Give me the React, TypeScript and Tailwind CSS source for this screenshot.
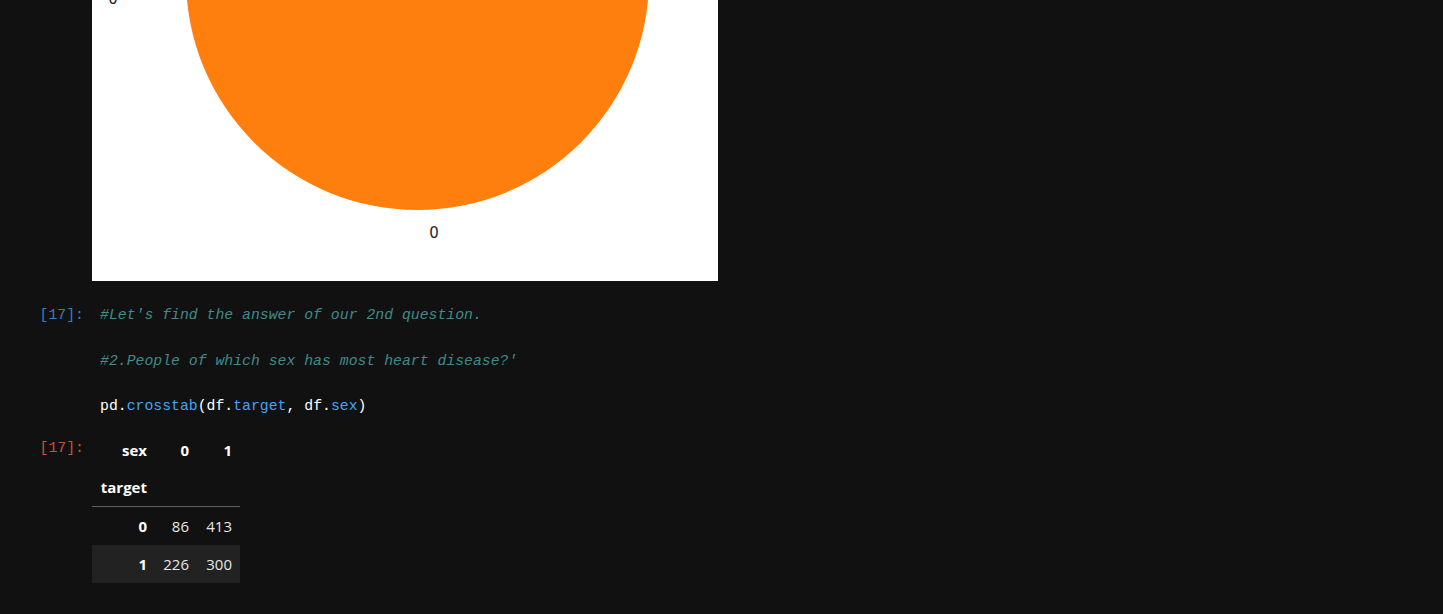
import React from 'react';

const mono = { fontFamily: '"Liberation Mono", "DejaVu Sans Mono", monospace' };

const PieOutput: React.FC = () => (
  <svg width="626" height="281" viewBox="0 0 626 281" className="block">
    <rect width="626" height="281" fill="#ffffff" />
    <circle cx="325.5" cy="-21.5" r="231.5" fill="#ff7f0e" />
    <text x="342" y="238" fontSize="15" fill="#262626" textAnchor="middle" fontFamily="DejaVu Sans, sans-serif">0</text>
    <text x="21" y="4" fontSize="15" fill="#262626" textAnchor="middle" fontFamily="DejaVu Sans, sans-serif">0</text>
  </svg>
);

const rows = [
  { idx: '0', a: '86', b: '413' },
  { idx: '1', a: '226', b: '300' },
];

export default function App() {
  return (
    <div className="min-h-screen w-full bg-[#111111] text-[#e6e6e6] overflow-hidden">
      {/* previous output: pie chart */}
      <div className="flex">
        <div className="w-[92px] shrink-0" />
        <PieOutput />
      </div>

      {/* input cell */}
      <div className="flex pt-[23px]" style={mono}>
        <div className="w-[92px] shrink-0 pr-[8px] text-right text-[14.8px] leading-[22.75px] text-[#307fc1]">[17]:</div>
        <pre className="pl-[8px] text-[14.8px] leading-[22.75px] whitespace-pre" style={mono}>
          <span className="italic text-[#408a8a]">#Let's find the answer of our 2nd question.</span>
          {'\n\n'}
          <span className="italic text-[#408a8a]">#2.People of which sex has most heart disease?'</span>
          {'\n\n'}
          <span className="text-white">pd.</span>
          <span className="text-[#42a5f5]">crosstab</span>
          <span className="text-white">(df.</span>
          <span className="text-[#42a5f5]">target</span>
          <span className="text-white">, df.</span>
          <span className="text-[#42a5f5]">sex</span>
          <span className="text-white">)</span>
        </pre>
      </div>

      {/* output cell */}
      <div className="flex pt-[13px]">
        <div className="w-[92px] shrink-0 pr-[8px] pt-[6px] text-right text-[14.8px] leading-[22.75px] text-[#c9552f]" style={mono}>[17]:</div>
        <div className="text-[15px]" style={{ fontFamily: '"Open Sans", "Noto Sans", sans-serif' }}>
          <div className="flex h-[38px] items-center font-bold text-white">
            <div className="w-[63px] px-2 text-right">sex</div>
            <div className="w-[42px] px-2 text-right">0</div>
            <div className="w-[43px] px-2 text-right">1</div>
          </div>
          <div className="flex h-[38px] items-center font-bold text-white border-b border-[#616161]">
            <div className="w-[63px] px-2 text-right">target</div>
            <div className="w-[42px] px-2" />
            <div className="w-[43px] px-2" />
          </div>
          {rows.map((r, i) => (
            <div key={r.idx} className={`flex h-[38px] items-center ${i % 2 === 1 ? 'bg-[#222222]' : ''}`}>
              <div className="w-[63px] px-2 text-right font-bold text-white">{r.idx}</div>
              <div className="w-[42px] px-2 text-right">{r.a}</div>
              <div className="w-[43px] px-2 text-right">{r.b}</div>
            </div>
          ))}
        </div>
      </div>
    </div>
  );
}
